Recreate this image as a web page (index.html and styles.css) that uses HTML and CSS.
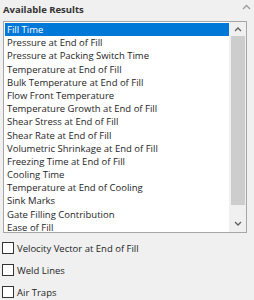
FILE: index.html
```html
<!DOCTYPE html>
<html lang="en">

<head>
    <meta charset="UTF-8">
    <title>Available Results</title>
    <link rel="stylesheet" href="styles.css">
</head>

<body>
    <div class="panel">
        <div class="header">
            <span class="title">Available Results</span>
            <svg class="collapse" width="9" height="6" viewBox="0 0 9 6">
                <path d="M1 5 L4.5 1.5 L8 5" fill="none" stroke="#9a9a9a" stroke-width="1.3"/>
            </svg>
        </div>

        <div class="listbox">
            <ul class="items">
                <li class="selected">Fill Time</li>
                <li>Pressure at End of Fill</li>
                <li>Pressure at Packing Switch Time</li>
                <li>Temperature at End of Fill</li>
                <li>Bulk Temperature at End of Fill</li>
                <li>Flow Front Temperature</li>
                <li>Temperature Growth at End of Fill</li>
                <li>Shear Stress at End of Fill</li>
                <li>Shear Rate at End of Fill</li>
                <li>Volumetric Shrinkage at End of Fill</li>
                <li>Freezing Time at End of Fill</li>
                <li>Cooling Time</li>
                <li>Temperature at End of Cooling</li>
                <li>Sink Marks</li>
                <li>Gate Filling Contribution</li>
                <li>Ease of Fill</li>
            </ul>
            <div class="scrollbar">
                <div class="arrow-up">
                    <svg width="8" height="5" viewBox="0 0 8 5">
                        <path d="M1 4 L4 1 L7 4" fill="none" stroke="#606060" stroke-width="1.3"/>
                    </svg>
                </div>
                <div class="thumb"></div>
                <div class="track"></div>
                <div class="arrow-down">
                    <svg width="8" height="5" viewBox="0 0 8 5">
                        <path d="M1 1 L4 4 L7 1" fill="none" stroke="#606060" stroke-width="1.3"/>
                    </svg>
                </div>
            </div>
        </div>

        <div class="options">
            <label class="option"><span class="box"></span>Velocity Vector at End of Fill</label>
            <label class="option"><span class="box"></span>Weld Lines</label>
            <label class="option"><span class="box"></span>Air Traps</label>
        </div>
    </div>
</body>
</html>
```

FILE: styles.css
```css
body {
    margin: 0;
    padding: 0;
    background-color: #f0f0f0;
    font-family: 'Open Sans', 'Noto Sans', sans-serif;
    font-size: 9.5px;
    color: #1e1e1e;
}

.panel {
    padding: 0 2px 0 3px;
}

.header {
    display: flex;
    justify-content: space-between;
    align-items: center;
    height: 19px;
}

.title {
    font-weight: bold;
    color: #333;
    margin-top: -1px;
}

.collapse {
    margin-right: 1px;
    margin-top: -6px;
}

.listbox {
    display: flex;
    width: 242px;
    height: 210px;
    margin-top: 2px;
    border: 1px solid #a6a6a6;
    background-color: #fff;
}

.items {
    flex: 1;
    list-style: none;
    margin: 0;
    padding: 1px 0 0 1px;
    overflow: hidden;
}

.items li {
    height: 13.2px;
    line-height: 13.2px;
    padding-left: 2px;
    white-space: nowrap;
}

.items li.selected {
    background-color: #0078d7;
    color: #fff;
}

.scrollbar {
    width: 17px;
    display: flex;
    flex-direction: column;
    align-items: center;
    background-color: #f0f0f0;
}

.arrow-up,
.arrow-down {
    display: flex;
    align-items: center;
    justify-content: center;
    width: 17px;
}

.arrow-up {
    height: 14px;
}

.arrow-down {
    height: 17px;
}

.thumb {
    width: 14px;
    height: 169px;
    background-color: #cdcdcd;
}

.track {
    flex: 1;
}

.options {
    display: flex;
    flex-direction: column;
    margin-top: 4px;
    margin-left: -1px;
}

.option {
    display: flex;
    align-items: center;
    height: 22px;
}

.box {
    width: 10px;
    height: 10px;
    margin-right: 3px;
    border: 1px solid #333;
    background-color: #fff;
}
```
